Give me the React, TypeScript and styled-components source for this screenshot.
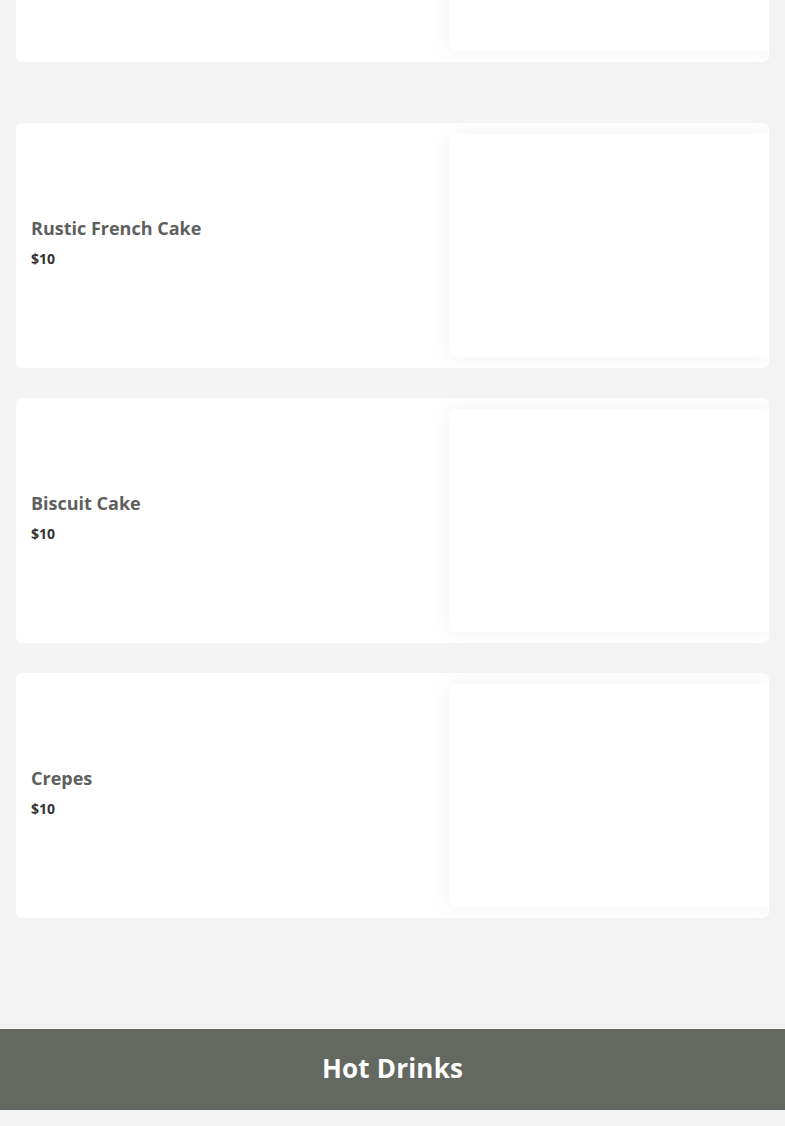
import React from 'react';
import styled, { createGlobalStyle } from 'styled-components';

const GlobalStyle = createGlobalStyle`
  html, body {
    margin: 0;
    padding: 0;
    background: #f2f3f2;
    font-family: "Open Sans", "Liberation Sans", sans-serif;
    overflow: hidden;
  }
`;

const Page = styled.div`
  width: 785px;
  height: 1126px;
  overflow: hidden;
  background: #f2f3f2;
`;

const MenuList = styled.div<{ $offset?: number; $gap?: number }>`
  display: flex;
  flex-direction: column;
  gap: ${(p) => p.$gap ?? 30}px;
  padding: 0 16px;
  margin-top: ${(p) => p.$offset ?? 0}px;
`;

const Card = styled.div`
  display: flex;
  height: 245px;
  background: #ffffff;
  border-radius: 6px;
  overflow: hidden;
`;

const Info = styled.div`
  flex: 1;
  display: flex;
  flex-direction: column;
  justify-content: center;
  padding: 0 15px 7px;
  gap: 10px;
`;

const Title = styled.h3`
  margin: 0;
  font-size: 18px;
  font-weight: 700;
  line-height: 24px;
  color: #5e605e;
`;

const Price = styled.span`
  font-size: 14px;
  font-weight: 700;
  line-height: 18px;
  color: #333333;
`;

const Photo = styled.div`
  width: 320px;
  margin: 11px 0;
  background: #ffffff;
  border-radius: 6px 0 0 6px;
  box-shadow: 0 0 22px rgba(0, 0, 0, 0.05);
`;

const CategoryBand = styled.div`
  margin-top: 111px;
  height: 81px;
  padding-bottom: 4px;
  box-sizing: border-box;
  background: #636861;
  display: flex;
  align-items: center;
  justify-content: center;
`;

const CategoryTitle = styled.h2`
  margin: 0;
  font-size: 26px;
  font-weight: 700;
  color: #ffffff;
  letter-spacing: 0.2px;
`;

const items = [
  { name: 'Rustic French Cake', price: '$10' },
  { name: 'Biscuit Cake', price: '$10' },
  { name: 'Crepes', price: '$10' },
];

const MenuCard: React.FC<{ name?: string; price?: string }> = ({ name, price }) => (
  <Card>
    <Info>
      {name && <Title>{name}</Title>}
      {price && <Price>{price}</Price>}
    </Info>
    <Photo />
  </Card>
);

const App: React.FC = () => {
  return (
    <Page>
      <GlobalStyle />
      <MenuList $offset={-183}>
        <MenuCard />
      </MenuList>
      <MenuList $offset={61}>
        {items.map((item) => (
          <MenuCard key={item.name} name={item.name} price={item.price} />
        ))}
      </MenuList>
      <CategoryBand>
        <CategoryTitle>Hot Drinks</CategoryTitle>
      </CategoryBand>
    </Page>
  );
};

export default App;
